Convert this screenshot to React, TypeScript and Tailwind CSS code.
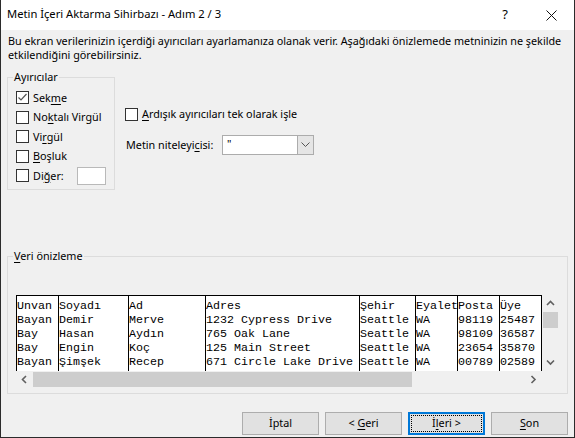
import React from 'react';

// column widths are in characters of the 7px monospace preview font
const colWidths = ['w-[42px]', 'w-[70px]', 'w-[77px]', 'w-[154px]', 'w-[56px]', 'w-[42px]', 'w-[42px]', 'w-[42px]'];

const previewRows = [
  ['Unvan', 'Soyadı', 'Ad', 'Adres', 'Şehir', 'Eyalet', 'Posta', 'Üye'],
  ['Bayan', 'Demir', 'Merve', '1232 Cypress Drive', 'Seattle', 'WA', '98119', '25487'],
  ['Bay', 'Hasan', 'Aydın', '765 Oak Lane', 'Seattle', 'WA', '98109', '36587'],
  ['Bay', 'Engin', 'Koç', '125 Main Street', 'Seattle', 'WA', '23654', '35870'],
  ['Bayan', 'Şimşek', 'Recep', '671 Circle Lake Drive', 'Seattle', 'WA', '00789', '02589'],
];

const Key = ({ children }: { children: React.ReactNode }) => <span className="underline underline-offset-2">{children}</span>;

const CheckBox = ({ checked }: { checked?: boolean }) => (
  <span className="flex h-[13px] w-[13px] shrink-0 items-center justify-center border border-[#333333] bg-white">
    {checked && (
      <svg width="11" height="11" viewBox="0 0 11 11">
        <polyline points="1.5,5.5 4,8 9.5,2" fill="none" stroke="#555555" strokeWidth="1.2" />
      </svg>
    )}
  </span>
);

const Arrow = ({ dir }: { dir: 'up' | 'down' | 'left' | 'right' }) => {
  const pts = {
    up: '1,5 4.5,1.5 8,5',
    down: '1,1.5 4.5,5 8,1.5',
    left: '5,1 1.5,4.5 5,8',
    right: '1.5,1 5,4.5 1.5,8',
  }[dir];
  const size = dir === 'up' || dir === 'down' ? { w: 9, h: 7 } : { w: 7, h: 9 };
  return (
    <svg width={size.w} height={size.h} viewBox={`0 0 ${size.w} ${size.h}`}>
      <polyline points={pts} fill="none" stroke="#606060" strokeWidth="1.6" />
    </svg>
  );
};

const SepRow = ({ checked, children }: { checked?: boolean; children: React.ReactNode }) => (
  <div className="flex h-[19.5px] items-center gap-[4px]">
    <CheckBox checked={checked} />
    <span>{children}</span>
  </div>
);

const Button = ({ children, primary }: { children: React.ReactNode; primary?: boolean }) => (
  <button
    className={
      primary
        ? 'flex h-[23px] w-[77px] items-center justify-center border-2 border-[#0078d7] bg-[#e1e1e1] p-[1px]'
        : 'flex h-[23px] w-[77px] items-center justify-center border border-[#adadad] bg-[#e1e1e1]'
    }
  >
    {primary ? (
      <span className="flex h-full w-full items-center justify-center border border-dotted border-black">
        <span>{children}</span>
      </span>
    ) : (
      <span>{children}</span>
    )}
  </button>
);

export default function App() {
  return (
    <div className="flex h-[438px] w-[575px] flex-col overflow-hidden whitespace-nowrap border-x border-b border-[#2b2b2b] bg-[#f0f0f0] font-['Segoe_UI','Noto_Sans',sans-serif] text-[10.8px] text-black">
      {/* title bar */}
      <div className="flex h-[30px] shrink-0 items-center bg-white pl-[6px]">
        <span className="flex-1 pb-[1px] text-[11.2px]">Metin İçeri Aktarma Sihirbazı - Adım 2 / 3</span>
        <div className="flex h-full w-[46px] items-center justify-center text-[13px]">?</div>
        <div className="flex h-full w-[46px] items-center justify-center">
          <svg width="11" height="11" viewBox="0 0 11 11">
            <path d="M0.5 0.5 L10.5 10.5 M10.5 0.5 L0.5 10.5" stroke="#111111" strokeWidth="1" />
          </svg>
        </div>
      </div>

      <div className="flex flex-1 flex-col px-[6px]">
        <p className="mt-[4px] pl-[1px] leading-[14px]">
          Bu ekran verilerinizin içerdiği ayırıcıları ayarlamanıza olanak verir. Aşağıdaki önizlemede metninizin ne şekilde
          <br />
          etkilendiğini görebilirsiniz.
        </p>

        <div className="mt-[7px] flex">
          <fieldset className="h-[121px] w-[108px] border border-[#dcdcdc] pl-[5px] pt-[3px]">
            <legend className="px-[1px] leading-[16px]">Ayırıcılar</legend>
            <div className="ml-[3px] flex flex-col">
              <SepRow checked>
                Sek<Key>m</Key>e
              </SepRow>
              <SepRow>
                No<Key>k</Key>talı Virgül
              </SepRow>
              <SepRow>
                Vi<Key>r</Key>gül
              </SepRow>
              <SepRow>
                <Key>B</Key>oşluk
              </SepRow>
              <div className="flex h-[19.5px] items-center gap-[4px]">
                <CheckBox />
                <span className="w-[40px]">
                  Di<Key>ğ</Key>er:
                </span>
                <span className="h-[18px] w-[29px] border border-[#b9b9b9] bg-white" />
              </div>
            </div>
          </fieldset>

          <div className="ml-[10px] flex flex-col">
            <div className="mt-[36px] flex h-[19px] items-center gap-[4px]">
              <CheckBox />
              <span>
                <Key>A</Key>rdışık ayırıcıları tek olarak işle
              </span>
            </div>
            <div className="mt-[11px] flex items-center">
              <span className="w-[97px] pl-[1px]">
                Metin niteleyi<Key>c</Key>isi:
              </span>
              <div className="flex h-[20px] w-[92px] border border-[#acacac] bg-white">
                <span className="flex-1 pl-[4px] leading-[16px]">"</span>
                <span className="flex w-[16px] items-center justify-center border-l border-[#acacac] bg-[#e5e5e5]">
                  <svg width="9" height="6" viewBox="0 0 9 6">
                    <polyline points="0.5,0.5 4.5,4.5 8.5,0.5" fill="none" stroke="#555555" strokeWidth="1" />
                  </svg>
                </span>
              </div>
            </div>
          </div>
        </div>

        <fieldset className="mt-[58px] h-[146px] border border-[#dcdcdc] pl-[5px] pt-[31px]">
          <legend className="px-[1px] leading-[16px]">
            <Key>V</Key>eri önizleme
          </legend>
          <div className="ml-[3px] flex flex-col">
            <div className="flex">
              {/* preview grid */}
              <div className="flex h-[76px] w-[526px] overflow-hidden border-r border-t border-black bg-white font-['Liberation_Mono','Courier_New',monospace] text-[11.67px] leading-[14px]">
                {colWidths.map((w, ci) => (
                  <div key={ci} className={`${w} shrink-0 overflow-hidden whitespace-pre border-l border-black pt-[3px]`}>
                    {previewRows.map((row, ri) => (
                      <div key={ri}>{row[ci]}</div>
                    ))}
                  </div>
                ))}
              </div>
              {/* vertical scrollbar */}
              <div className="flex h-[76px] w-[17px] flex-col items-center">
                <div className="flex h-[17px] items-center justify-center">
                  <Arrow dir="up" />
                </div>
                <div className="h-[16px] w-[15px] bg-[#cdcdcd]" />
                <div className="flex-1" />
                <div className="flex h-[17px] items-center justify-center">
                  <Arrow dir="down" />
                </div>
              </div>
            </div>
            {/* horizontal scrollbar */}
            <div className="flex h-[17px] w-[526px] items-center">
              <div className="flex w-[17px] justify-center">
                <Arrow dir="left" />
              </div>
              <div className="h-[15px] w-[379px] bg-[#cdcdcd]" />
              <div className="flex-1" />
              <div className="flex w-[17px] justify-center">
                <Arrow dir="right" />
              </div>
            </div>
          </div>
        </fieldset>

        <div className="mt-[18px] flex justify-end gap-[6px]">
          <Button>İptal</Button>
          <Button>
            &lt; <Key>G</Key>eri
          </Button>
          <Button primary>
            İ<Key>l</Key>eri &gt;
          </Button>
          <Button>
            <Key>S</Key>on
          </Button>
        </div>
      </div>
    </div>
  );
}
